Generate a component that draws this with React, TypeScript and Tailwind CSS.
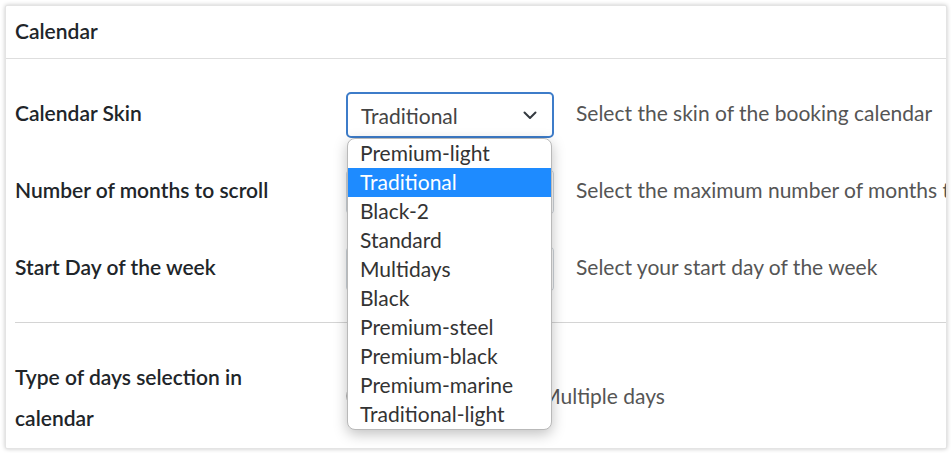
const skins = [
  'Premium-light',
  'Traditional',
  'Black-2',
  'Standard',
  'Multidays',
  'Black',
  'Premium-steel',
  'Premium-black',
  'Premium-marine',
  'Traditional-light',
];

const Chevron = () => (
  <svg width="16" height="16" viewBox="0 0 16 16" fill="none">
    <path d="M2.5 5.5L8 11l5.5-5.5" stroke="#343a40" strokeWidth="2" strokeLinecap="round" strokeLinejoin="round" />
  </svg>
);

const SelectBox = ({ value, focused }: { value: string; focused?: boolean }) => (
  <div
    className={`flex h-[46px] w-[208px] shrink-0 items-center justify-between rounded-[5px] bg-white pl-[13px] pr-[14px] text-[#444] ${
      focused ? 'border-2 border-[#3d7cc9]' : 'border border-[#ced4da]'
    }`}
  >
    <span className="mt-[2px]">{value}</span>
    <Chevron />
  </div>
);

const rows = [
  { label: 'Calendar Skin', value: 'Traditional', help: 'Select the skin of the booking calendar', focused: true },
  { label: 'Number of months to scroll', value: '1', help: 'Select the maximum number of months to show (scroll)' },
  { label: 'Start Day of the week', value: 'Monday', help: 'Select your start day of the week' },
];

export default function App() {
  return (
    <div className="min-h-screen bg-white p-[5px] font-['Lato',sans-serif] text-[21px] text-[#212529]">
      <div className="relative h-[444px] w-[942px] overflow-hidden rounded-[2px] border border-[#e4e4e4] bg-white shadow-[0_0_4px_rgba(0,0,0,0.22)]">
        {/* Header */}
        <div className="flex h-[53px] items-center border-b border-[#dedede] px-[9px] pb-[3px] font-semibold">Calendar</div>

        {/* Body */}
        <div className="pl-[9px] pt-[33px]">
          <div className="flex flex-col gap-[31px]">
            {rows.map(row => (
              <div key={row.label} className="flex items-center whitespace-nowrap">
                <div className="mb-[5px] w-[331px] shrink-0 font-semibold">{row.label}</div>
                <SelectBox value={row.value} focused={row.focused} />
                <div className="mb-[5px] ml-[22px] text-[#555]">{row.help}</div>
              </div>
            ))}
          </div>

          <div className="mt-[30px] border-t border-[#d4d4d4]" />

          <div className="flex items-center whitespace-nowrap pt-[33px]">
            <div className="w-[331px] shrink-0 font-semibold leading-[41px]">
              Type of days selection in
              <br />
              calendar
            </div>
            <div className="mb-[3px] flex items-center text-[#555]">
              <span className="h-[20px] w-[20px] rounded-full border border-[#b5b5b5]" />
              <span className="ml-[8px]">Single day</span>
              <span className="ml-[46px] h-[20px] w-[20px] rounded-full border border-[#b5b5b5]" />
              <span className="ml-[8px]">Multiple days</span>
            </div>
          </div>
        </div>

        {/* Open dropdown list */}
        <div className="absolute left-[341px] top-[132px] w-[205px] overflow-hidden rounded-[8px] border border-[#b9b9b9] bg-white shadow-[0_4px_14px_rgba(0,0,0,0.25)]">
          {skins.map(s => (
            <div
              key={s}
              className={`flex h-[29px] items-center px-[12px] pb-[2px] ${
                s === 'Traditional' ? 'bg-[#1e8bff] text-white' : 'text-[#333]'
              }`}
            >
              {s}
            </div>
          ))}
        </div>
      </div>
    </div>
  );
}
